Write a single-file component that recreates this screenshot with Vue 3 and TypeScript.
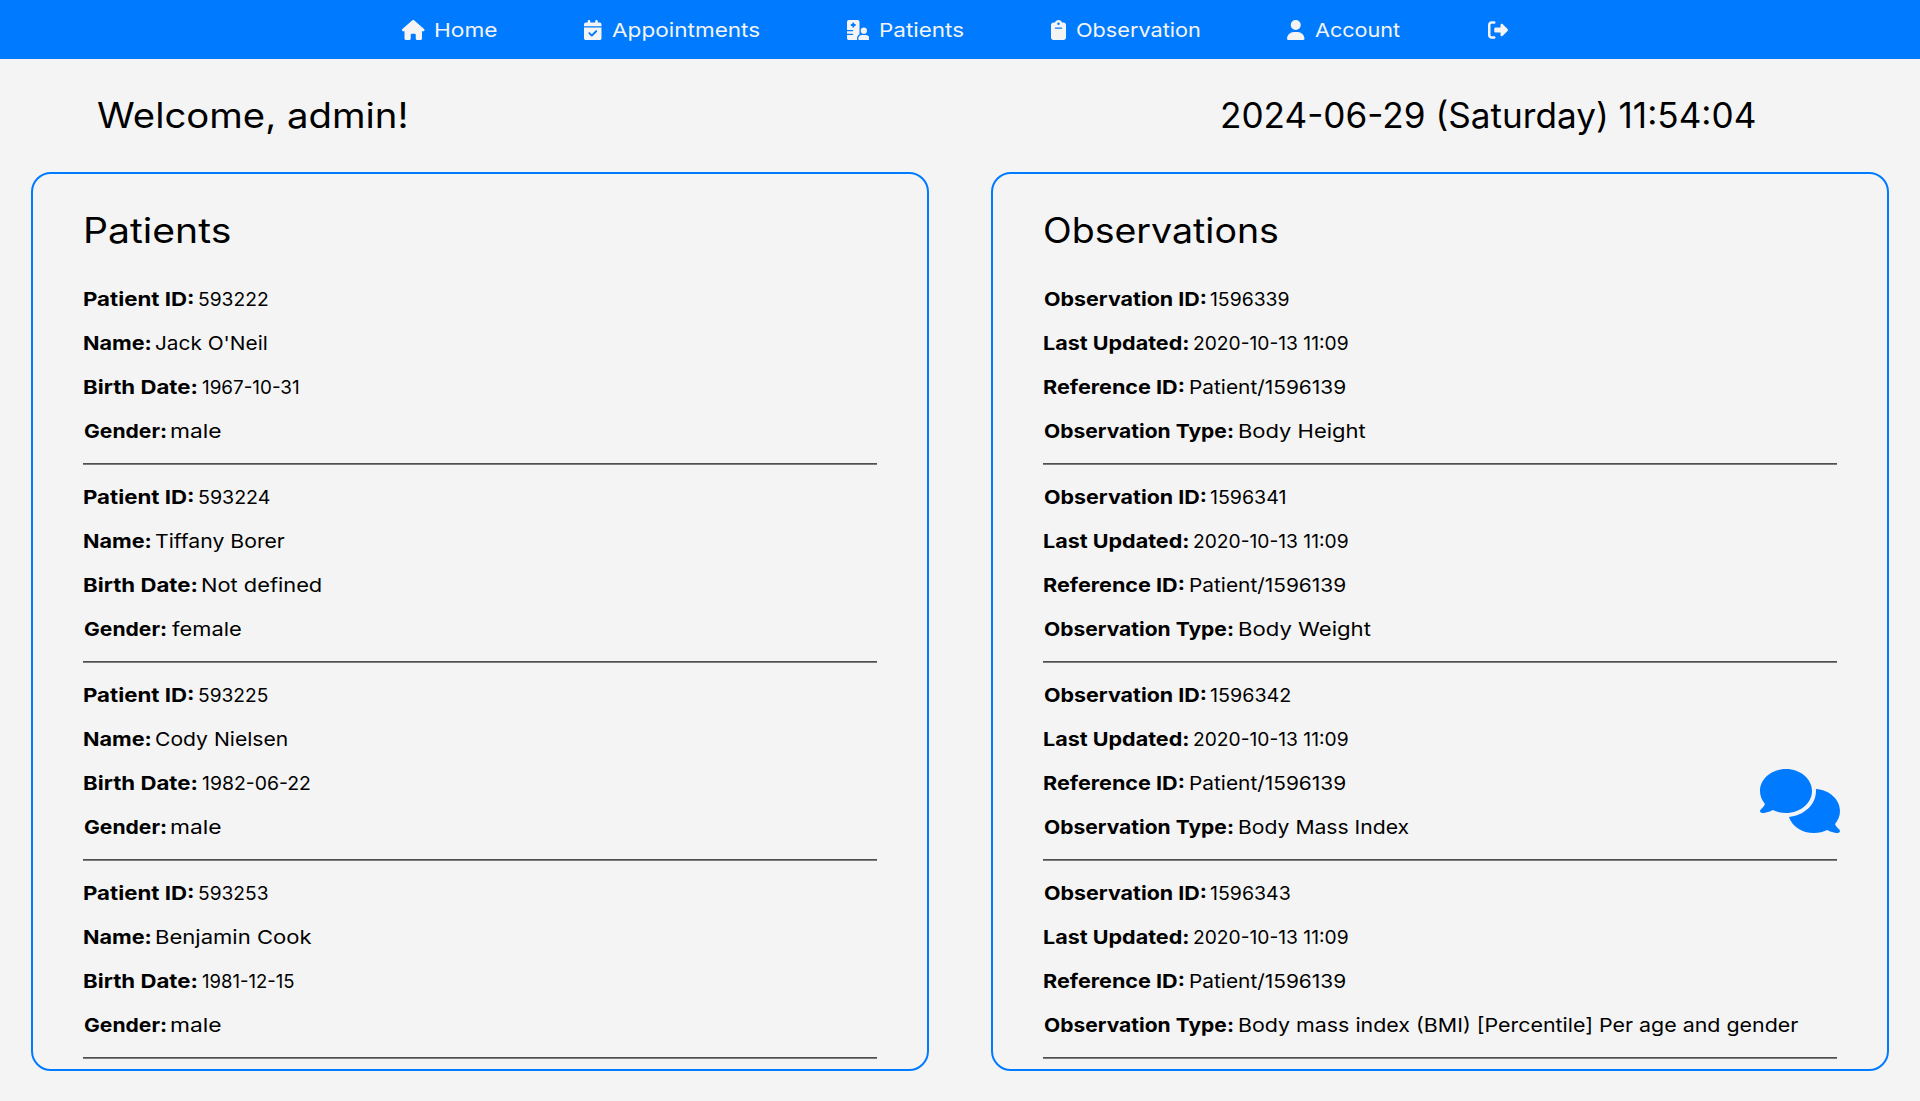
<script setup lang="ts">
interface NavItem {
  text: string
  box: number
  iconWidth: number
  textX: number
  ink: number
  width: number
  path: string
}

interface Field {
  label: string
  labelInk: number
  value: string
  x: number
  ink: number
}

const family = 'Inter, "Open Sans", sans-serif'
const ctx = document.createElement('canvas').getContext('2d')!

// Stretches a line of text so its drawn width equals `ink`, starting exactly at `x`.
// Measured at 20 times the size, since glyph bounds are rounded to whole pixels.
function fit(text: string, size: number, weight: number, x: number, ink: number) {
  ctx.font = `${weight} ${size * 20}px ${family}`
  const m = ctx.measureText(text)
  const left = m.actualBoundingBoxLeft / 20
  const right = m.actualBoundingBoxRight / 20
  const k = ink / (left + right)
  return {
    marginLeft: `${x + k * left}px`,
    transform: `scaleX(${k})`,
  }
}

const nav: NavItem[] = [
  {
    text: 'Home', box: 576, iconWidth: 22.5, textX: 33.5, ink: 61, width: 182,
    path: 'M575.8 255.5c0 18-15 32.1-32 32.1l-32 0 .7 160.2c0 2.7-.2 5.4-.5 8.1l0 16.2c0 22.1-17.9 40-40 40l-16 0c-1.1 0-2.2 0-3.3-.1c-1.4 .1-2.8 .1-4.2 .1L416 512l-24 0c-22.1 0-40-17.9-40-40l0-24 0-64c0-17.7-14.3-32-32-32l-64 0c-17.7 0-32 14.3-32 32l0 64 0 24c0 22.1-17.9 40-40 40l-24 0-31.9 0c-1.5 0-3-.1-4.5-.2c-1.2 .1-2.4 .2-3.6 .2l-16 0c-22.1 0-40-17.9-40-40l0-112c0-.9 0-1.9 .1-2.8l0-69.7-32 0c-18 0-32-14-32-32.1c0-9 3-17 10-24L266.4 8c7-7 15-8 22-8s15 2 21 7L564.8 231.5c8 7 12 15 11 24z',
  },
  {
    text: 'Appointments', box: 448, iconWidth: 17.5, textX: 28, ink: 147, width: 262.8,
    path: 'M128 0c17.7 0 32 14.3 32 32l0 32 128 0 0-32c0-17.7 14.3-32 32-32s32 14.3 32 32l0 32 48 0c26.5 0 48 21.5 48 48l0 48L0 160l0-48C0 85.5 21.5 64 48 64l48 0 0-32c0-17.7 14.3-32 32-32zM0 192l448 0 0 272c0 26.5-21.5 48-48 48L48 512c-26.5 0-48-21.5-48-48L0 192zM329 305c9.4-9.4 9.4-24.6 0-33.9s-24.6-9.4-33.9 0l-95 95-47-47c-9.4-9.4-24.6-9.4-33.9 0s-9.4 24.6 0 33.9l64 64c9.4 9.4 24.6 9.4 33.9 0L329 305z',
  },
  {
    text: 'Patients', box: 576, iconWidth: 22.5, textX: 33.8, ink: 82.4, width: 204,
    path: 'M48 0C21.5 0 0 21.5 0 48L0 256l144 0c8.8 0 16 7.2 16 16s-7.2 16-16 16L0 288l0 64 144 0c8.8 0 16 7.2 16 16s-7.2 16-16 16L0 384l0 80c0 26.5 21.5 48 48 48l217.9 0c-6.3-10.2-9.9-22.2-9.9-35.1c0-46.9 25.8-87.8 64-109.2l0-95.9L320 48c0-26.5-21.5-48-48-48L48 0zM152 64l16 0c8.8 0 16 7.2 16 16l0 24 24 0c8.8 0 16 7.2 16 16l0 16c0 8.8-7.2 16-16 16l-24 0 0 24c0 8.8-7.2 16-16 16l-16 0c-8.8 0-16-7.2-16-16l0-24-24 0c-8.8 0-16-7.2-16-16l0-16c0-8.8 7.2-16 16-16l24 0 0-24c0-8.8 7.2-16 16-16zM512 272a80 80 0 1 0 -160 0 80 80 0 1 0 160 0zM288 477.1c0 19.3 15.6 34.9 34.9 34.9l218.2 0c19.3 0 34.9-15.6 34.9-34.9c0-51.4-41.7-93.1-93.1-93.1l-101.8 0c-51.4 0-93.1 41.7-93.1 93.1z',
  },
  {
    text: 'Observation', box: 384, iconWidth: 15, textX: 25.6, ink: 122.4, width: 236.3,
    path: 'M192 0c-41.8 0-77.4 26.7-90.5 64L64 64C28.7 64 0 92.7 0 128L0 448c0 35.3 28.7 64 64 64l256 0c35.3 0 64-28.7 64-64l0-320c0-35.3-28.7-64-64-64l-37.5 0C269.4 26.7 233.8 0 192 0zm0 64a32 32 0 1 1 0 64 32 32 0 1 1 0-64zM112 192l160 0c8.8 0 16 7.2 16 16s-7.2 16-16 16l-160 0c-8.8 0-16-7.2-16-16s7.2-16 16-16z',
  },
  {
    text: 'Account', box: 448, iconWidth: 17.5, textX: 27.8, ink: 84.6, width: 200.4,
    path: 'M224 256A128 128 0 1 0 224 0a128 128 0 1 0 0 256zm-45.7 48C79.8 304 0 383.8 0 482.3C0 498.7 13.3 512 29.7 512l388.6 0c16.4 0 29.7-13.3 29.7-29.7C448 383.8 368.2 304 269.7 304l-91.4 0z',
  },
  {
    text: '', box: 512, iconWidth: 20, textX: 0, ink: 0, width: 20,
    path: 'M377.9 105.9L500.7 228.7c7.2 7.2 11.3 17.1 11.3 27.3s-4.1 20.1-11.3 27.3L377.9 406.1c-6.4 6.4-15 9.9-24 9.9c-18.7 0-33.9-15.2-33.9-33.9l0-62.1-128 0c-17.7 0-32-14.3-32-32l0-64c0-17.7 14.3-32 32-32l128 0 0-62.1c0-18.7 15.2-33.9 33.9-33.9c9 0 17.6 3.6 24 9.9zM160 96L96 96c-17.7 0-32 14.3-32 32l0 256c0 17.7 14.3 32 32 32l64 0c17.7 0 32 14.3 32 32s-14.3 32-32 32l-64 0c-53 0-96-43-96-96L0 128C0 75 43 32 96 32l64 0c17.7 0 32 14.3 32 32s-14.3 32-32 32z',
  },
]

type Cell = [value: string, ink: number]

function patient(id: Cell, name: Cell, birth: Cell, gender: Cell): Field[] {
  return [
    { label: 'Patient ID:', labelInk: 108.6, value: id[0], x: 116.5, ink: id[1] },
    { label: 'Name:', labelInk: 66, value: name[0], x: 73.4, ink: name[1] },
    { label: 'Birth Date:', labelInk: 112, value: birth[0], x: 119.8, ink: birth[1] },
    { label: 'Gender:', labelInk: 81, value: gender[0], x: 88.8, ink: gender[1] },
  ]
}

function observation(id: Cell, type: Cell): Field[] {
  return [
    { label: 'Observation ID:', labelInk: 161, value: id[0], x: 168.3, ink: id[1] },
    { label: 'Last Updated:', labelInk: 143.8, value: '2020-10-13 11:09', x: 151.2, ink: 153.4 },
    { label: 'Reference ID:', labelInk: 139.2, value: 'Patient/1596139', x: 147.9, ink: 154.4 },
    { label: 'Observation Type:', labelInk: 188, value: type[0], x: 196.5, ink: type[1] },
  ]
}

const panels: { title: string; x: number; ink: number; items: Field[][] }[] = [
  {
    title: 'Patients', x: 3.3, ink: 143.6,
    items: [
      patient(['593222', 68.3], ["Jack O'Neil", 110.4], ['1967-10-31', 95.4], ['male', 49.4]),
      patient(['593224', 70.2], ['Tiffany Borer', 128.6], ['Not defined', 118.2], ['female', 69]),
      patient(['593225', 68.3], ['Cody Nielsen', 130.8], ['1982-06-22', 106.8], ['male', 49.4]),
      patient(['593253', 68.3], ['Benjamin Cook', 155], ['1981-12-15', 90.8], ['male', 49.4]),
    ],
  },
  {
    title: 'Observations', x: 1.6, ink: 232.6,
    items: [
      observation(['1596339', 77.6], ['Body Height', 125.8]),
      observation(['1596341', 74], ['Body Weight', 131]),
      observation(['1596342', 79.2], ['Body Mass Index', 169]),
      observation(['1596343', 78.8], ['Body mass index (BMI) [Percentile] Per age and gender', 558.8]),
    ],
  },
]
</script>

<template>
  <div class="page">
    <nav class="navbar">
      <a v-for="item in nav" :key="item.text" class="nav-item" :style="{ width: item.width + 'px' }">
        <svg class="icon" :viewBox="`0 0 ${item.box} 512`" :width="item.iconWidth" height="20"><path :d="item.path" /></svg>
        <span
          v-if="item.text"
          class="fit"
          :style="fit(item.text, 19.3, 400, item.textX - item.iconWidth, item.ink)"
        >{{ item.text }}</span>
      </a>
    </nav>

    <header class="header">
      <h1><span class="fit" :style="fit('Welcome, admin!', 34.7, 400, 97.3, 308.4)">Welcome, admin!</span></h1>
      <h1><span class="fit" :style="fit('2024-06-29 (Saturday) 11:54:04', 34.7, 400, 262, 532.5)">2024-06-29 (Saturday) 11:54:04</span></h1>
    </header>

    <main class="panels">
      <section v-for="panel in panels" :key="panel.title" class="panel">
        <h2><span class="fit" :style="fit(panel.title, 34.7, 400, panel.x, panel.ink)">{{ panel.title }}</span></h2>
        <div v-for="(fields, i) in panel.items" :key="i" class="record">
          <p v-for="f in fields" :key="f.label" class="field">
            <span class="label" :style="{ width: f.x + 'px' }">
              <strong class="fit" :style="fit(f.label, 19.3, 700, 1.2, f.labelInk)">{{ f.label }}</strong>
            </span>
            <span class="fit" :style="fit(f.value, 19.3, 400, 0, f.ink)">{{ f.value }}</span>
          </p>
          <hr />
        </div>
      </section>
    </main>

    <button class="chat" aria-label="Chat">
      <svg viewBox="0 0 640 512" width="80" height="64">
        <path d="M208 352c114.9 0 208-78.8 208-176S322.9 0 208 0S0 78.8 0 176c0 38.6 14.7 74.3 39.6 103.4c-3.5 9.4-8.7 17.7-14.2 24.7c-4.8 6.2-9.7 11-13.3 14.3c-1.8 1.6-3.3 2.9-4.3 3.7c-.5 .4-.9 .7-1.1 .8l-.2 .2C1 327.2-1.4 334.4 .8 340.9S9.1 352 16 352c21.8 0 43.8-5.6 62.1-12.5c9.2-3.5 17.8-7.4 25.3-11.4C134.1 343.3 169.8 352 208 352zM448 176c0 112.3-99.1 196.9-216.5 207C255.8 457.4 336.4 512 432 512c38.2 0 73.9-8.7 104.7-23.9c7.5 4 16 7.9 25.2 11.4c18.3 6.9 40.3 12.5 62.1 12.5c6.9 0 13.1-4.5 15.2-11.1c2.1-6.6-.2-13.8-5.8-17.9l-.2-.2c-.2-.2-.6-.4-1.1-.8c-1-.8-2.5-2-4.3-3.7c-3.6-3.3-8.5-8.1-13.3-14.3c-5.5-7-10.7-15.4-14.2-24.7c24.9-29 39.6-64.7 39.6-103.4c0-92.8-84.9-168.9-192.6-175.5c.4 5.1 .6 10.3 .6 15.5z" />
      </svg>
    </button>
  </div>
</template>

<style>
body {
  background: #f4f4f4;
}
</style>

<style scoped>
.page {
  height: 1101px;
  overflow: hidden;
  background: #f4f4f4;
  color: #000;
  font-family: Inter, "Open Sans", sans-serif;
  font-size: 19.3px;
}

.fit {
  display: inline-block;
  flex: none;
  white-space: nowrap;
  transform-origin: 0 50%;
}

.navbar {
  display: flex;
  align-items: center;
  height: 59px;
  padding-left: 402.2px;
  background: #007bff;
  color: #f4f4f4;
}

.nav-item {
  display: flex;
  flex: none;
  align-items: center;
  line-height: 59px;
}

.nav-item .fit {
  padding-top: 2px;
}

.icon {
  flex: none;
  fill: #f4f4f4;
}

.header {
  display: grid;
  grid-template-columns: 1fr 1fr;
  height: 113px;
  line-height: 113px;
}

h1,
h2 {
  margin: 0;
  font-size: 34.7px;
  font-weight: 400;
}

.panels {
  display: grid;
  grid-template-columns: 1fr 1fr;
  gap: 62px;
  padding: 0 31px;
}

.panel {
  box-sizing: border-box;
  height: 899px;
  padding: 30px 50px 0;
  overflow: hidden;
  border: 2px solid #007bff;
  border-radius: 20px;
}

h2 {
  height: 52px;
  margin-bottom: 21px;
  line-height: 52px;
}

.field {
  display: flex;
  height: 44px;
  margin: 0;
  line-height: 44px;
}

.label {
  flex: none;
}

strong {
  font-weight: 700;
}

hr {
  height: 1px;
  margin: 10px 0;
  border: 0;
  border-bottom: 1px solid #7c7c7c;
  background: #505050;
}

.chat {
  position: fixed;
  right: 80px;
  bottom: 268px;
  padding: 0;
  border: 0;
  background: none;
  line-height: 0;
}

.chat svg {
  fill: #007bff;
}
</style>
